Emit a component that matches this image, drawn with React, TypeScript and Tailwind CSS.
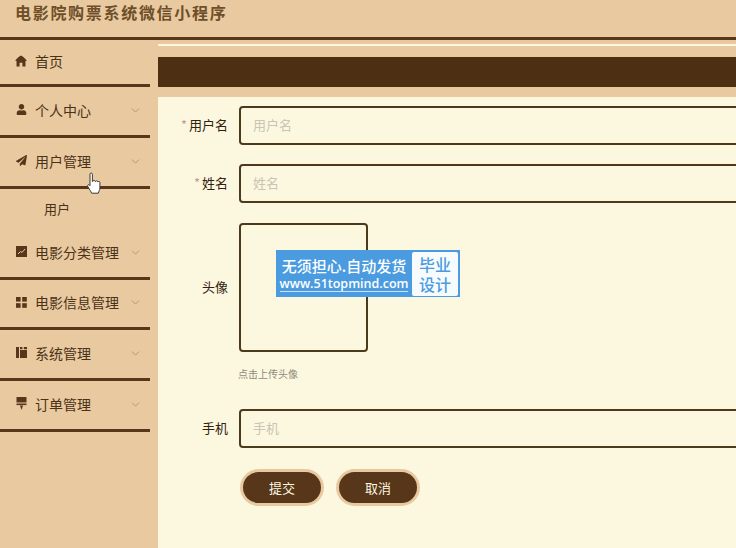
import React from "react";
import { FaUser, FaPaperPlane } from "react-icons/fa";
import { ChevronDown } from "lucide-react";

const House = () => (
  <svg width="12" height="12" viewBox="0 0 11 11" fill="#57361a"><path d="M5.5 0.4 C7.5 1.6 9.6 3.4 10.8 5.2 L9.6 5.6 V10.6 H6.8 V7.2 H4.2 V10.6 H1.4 V5.6 L0.2 5.2 C1.4 3.4 3.5 1.6 5.5 0.4Z" /></svg>
);
const Chart = () => (
  <svg width="11" height="11" viewBox="0 0 11 11"><rect width="11" height="11" fill="#57361a" /><path d="M2 8 L4.5 5.5 L6 6.5 L9 3" stroke="#e8c9a0" strokeWidth="1" fill="none" /></svg>
);
const Grid = () => (
  <svg width="11" height="11" viewBox="0 0 11 11" fill="#57361a"><rect width="4.6" height="4.6" /><rect x="6.2" width="4.6" height="4.6" /><rect y="6.2" width="4.6" height="4.6" /><rect x="6.2" y="6.2" width="4.6" height="4.6" /></svg>
);
const Books = () => (
  <svg width="11" height="11" viewBox="0 0 11 11" fill="#57361a"><rect y="0" width="3" height="11" /><rect x="4" y="3" width="7" height="8" /><rect x="4" y="0" width="2.4" height="2.2" /><rect x="7.8" y="0" width="3.2" height="2.2" /></svg>
);
const Pin = () => (
  <svg width="11" height="13" viewBox="0 0 11 13" fill="#57361a"><rect x="0.5" y="0" width="10" height="5.5" /><rect x="0.5" y="6.5" width="10" height="1.6" /><path d="M4 8.5 H7 L5.5 13 Z" /></svg>
);

const Item = ({ icon, label, arrow = true, className = "h-[51px]" }: { icon: React.ReactNode; label: string; arrow?: boolean; className?: string }) => (
  <div className={`${className} w-[150px] border-b-[3px] border-[#57361a] flex items-center pl-[15px] pr-[8px] pb-[3px]`}>
    <span className="w-[12px] flex justify-center shrink-0">{icon}</span>
    <span className="ml-[8px] text-[14px] text-[#4b3116] leading-none">{label}</span>
    {arrow && <ChevronDown className="ml-auto mt-[1px] text-[#ad8d60]" size={13} strokeWidth={1.5} />}
  </div>
);

const Field = ({ label, required, placeholder }: { label: string; required?: boolean; placeholder: string }) => (
  <div className="flex items-center h-[39px]">
    <div className="w-[70px] shrink-0 text-right text-[13px] text-[#33210f] pb-[1px]">
      {required && <span className="text-[#c79a8a] mr-[2px]">*</span>}
      {label}
    </div>
    <div className="ml-[11px] w-[640px] h-[39px] border-2 border-[#4b3a1c] rounded-[4px] flex items-center pl-[12px] pb-[1px] text-[13px] text-[#c9c5b4] shrink-0">
      {placeholder}
    </div>
  </div>
);

export default function App() {
  return (
    <div
      className="relative w-[736px] h-[548px] overflow-hidden bg-[#e8c9a0] flex flex-col"
      style={{ fontFamily: '"Noto Sans CJK SC", "Noto Sans", sans-serif' }}
    >
      <header className="h-[40px] shrink-0 border-b-[3px] border-[#57361a] bg-[#e8c9a0] flex items-center pl-[15px] pb-[13px]">
        <h1 className="text-[16px] font-bold tracking-[1.7px] text-[#6e4f29]" style={{ fontFamily: '"Noto Sans CJK SC", serif' }}>电影院购票系统微信小程序</h1>
      </header>

      <div className="flex flex-1 min-h-0">
        <aside className="w-[158px] shrink-0 bg-[#e8c9a0]">
          <Item className="h-[47px]" icon={<House />} label="首页" arrow={false} />
          <Item className="h-[51px]" icon={<FaUser size={11} color="#57361a" />} label="个人中心" />
          <Item className="h-[51px]" icon={<FaPaperPlane size={11} color="#57361a" />} label="用户管理" />
          <div className="h-[40px] flex items-center pl-[44px] pb-[1px] text-[13px] text-[#4b3116]">用户</div>
          <Item icon={<Chart />} label="电影分类管理" />
          <Item className="h-[50px]" icon={<Grid />} label="电影信息管理" />
          <Item icon={<Books />} label="系统管理" />
          <Item icon={<Pin />} label="订单管理" />
        </aside>

        <main className="flex-1 min-w-0 overflow-hidden flex flex-col">
          <div className="h-[2px] mt-[4px] bg-[#fcf8e0]" />
          <div className="h-[30px] mt-[11px] bg-[#4d3014] shrink-0" />
          <div className="flex-1 mt-[10px] bg-[#fcf8e0] pt-[9px]">
            <Field label="用户名" required placeholder="用户名" />
            <div className="mt-[19px]">
              <Field label="姓名" required placeholder="姓名" />
            </div>
            <div className="mt-[20px] flex items-center h-[129px]">
              <div className="w-[70px] shrink-0 text-right text-[13px] text-[#33210f] pb-[2px]">头像</div>
              <div className="ml-[11px] w-[129px] h-[129px] border-2 border-[#4b3a1c] rounded-[4px]" />
            </div>
            <div className="mt-[14px] ml-[80px] text-[10px] leading-[16px] text-[#8f8a7a]">点击上传头像</div>
            <div className="mt-[27px]">
              <Field label="手机" placeholder="手机" />
            </div>
            <div className="mt-[24px] ml-[85px] flex gap-[18px]">
              <button className="w-[78px] h-[31px] rounded-full bg-[#57361a] ring-[3px] ring-[#e8c9a0] text-[13px] text-[#fcf8e0]">提交</button>
              <button className="w-[78px] h-[31px] rounded-full bg-[#57361a] ring-[3px] ring-[#e8c9a0] text-[13px] text-[#fcf8e0]">取消</button>
            </div>
          </div>
        </main>
      </div>

      <div className="absolute left-[276px] top-[250px] w-[184px] h-[47px] bg-[#4a9be0] flex items-center text-white">
        <div className="w-[136px] flex flex-col items-center">
          <span className="text-[15px] leading-[21px] font-medium whitespace-nowrap">无须担心.自动发货</span>
          <span className="text-[12.5px] leading-[15px] border-b border-[#cfe4f7] font-semibold whitespace-nowrap" style={{ fontFamily: '"Open Sans", sans-serif' }}>www.51topmind.com</span>
        </div>
        <div className="w-[46px] h-[44px] bg-[#f8fbfe] rounded-[2px] text-[#4a9be0] text-[16px] leading-[20px] flex items-center justify-center text-center font-medium">毕业<br />设计</div>
      </div>

      <svg className="absolute left-[86px] top-[172px]" width="16" height="24" viewBox="0 0 16 24">
        <path d="M4 2.2c0-1.6 2.4-1.6 2.4 0v7.3l.4-.1c0-1.4 2.2-1.4 2.3 0l.3.2c.2-1.2 2.1-1.2 2.2.2l.3.2c.4-1 1.9-.8 2 .5v5.2c0 2.6-1.2 3.5-1.6 5.5H5.6c-.4-1.6-2.2-3.8-3.8-6.6-.8-1.5.8-2.6 1.8-1.4l.4.5z" fill="#fff" stroke="#3b3b3b" strokeWidth="1" strokeLinejoin="round" />
      </svg>
    </div>
  );
}
